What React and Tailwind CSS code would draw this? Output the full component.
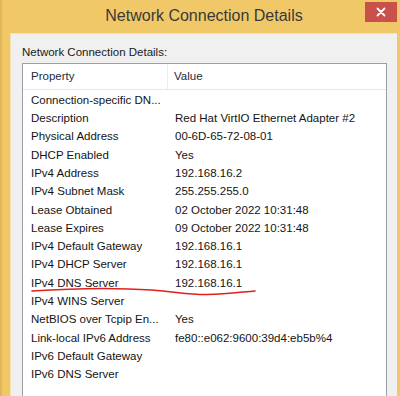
const rows = [
  ["Connection-specific DN...", ""],
  ["Description", "Red Hat VirtIO Ethernet Adapter #2"],
  ["Physical Address", "00-6D-65-72-08-01"],
  ["DHCP Enabled", "Yes"],
  ["IPv4 Address", "192.168.16.2"],
  ["IPv4 Subnet Mask", "255.255.255.0"],
  ["Lease Obtained", "02 October 2022 10:31:48"],
  ["Lease Expires", "09 October 2022 10:31:48"],
  ["IPv4 Default Gateway", "192.168.16.1"],
  ["IPv4 DHCP Server", "192.168.16.1"],
  ["IPv4 DNS Server", "192.168.16.1"],
  ["IPv4 WINS Server", ""],
  ["NetBIOS over Tcpip En...", "Yes"],
  ["Link-local IPv6 Address", "fe80::e062:9600:39d4:eb5b%4"],
  ["IPv6 Default Gateway", ""],
  ["IPv6 DNS Server", ""],
];

export default function App() {
  return (
    <div
      className="relative w-[400px] h-[396px] overflow-hidden bg-[#f0c868] border-l-[2px] border-[#e3b75a] flex flex-col"
      style={{ fontFamily: '"Liberation Sans", Arial, sans-serif' }}
    >
      {/* Title bar */}
      <div className="relative h-[33px] shrink-0 flex items-center justify-center pl-[6px] pb-[1px]">
        <span className="text-[16px] text-[#3a3a3a]">Network Connection Details</span>
        <div className="absolute right-[3px] top-[2px] w-[32px] h-[20px] bg-[#c9504b] flex items-center justify-center">
          <svg width="10" height="10" viewBox="0 0 10 10">
            <path d="M1.5 1.5 L8.5 8.5 M8.5 1.5 L1.5 8.5" stroke="#fff" strokeWidth="1.8" strokeLinecap="round" />
          </svg>
        </div>
      </div>

      {/* Client area */}
      <div className="flex-1 ml-[8px] mr-[3px] bg-[#f0f0f0] border-l border-t border-[#f6e2b0] pl-[11px] pr-[10px] pt-[11px] flex flex-col">
        <div className="text-[11.5px] leading-[14px] text-[#1a1a1a]">Network Connection Details:</div>
        <div className="relative mt-[4px] flex-1 bg-white border border-[#9a9ea6] border-b-0">
          {/* Header */}
          <div className="flex h-[26px] border-b border-[#e2e8f0] text-[11.5px] text-[#1e2b3c]">
            <div className="w-[145px] border-r border-[#e8edf3] pl-[8px] flex items-center">Property</div>
            <div className="pl-[6px] flex items-center">Value</div>
          </div>
          {/* Rows */}
          <div className="pt-[1px]">
            {rows.map(([k, v]) => (
              <div key={k} className="flex h-[18.33px] items-center text-[11.5px] text-[#141414] whitespace-nowrap">
                <div className="w-[145px] pl-[8px]">{k}</div>
                <div className="pl-[7px]">{v}</div>
              </div>
            ))}
          </div>
        </div>
      </div>

      {/* Red hand-drawn annotation */}
      <svg className="absolute left-0 top-0 pointer-events-none" width="400" height="396">
        <path
          d="M30 291 C60 289 105 287 150 290 C175 292 190 295 205 294.5 C225 294 240 292 253 291"
          fill="none"
          stroke="#e0201c"
          strokeWidth="1.6"
          strokeLinecap="round"
        />
      </svg>
    </div>
  );
}
